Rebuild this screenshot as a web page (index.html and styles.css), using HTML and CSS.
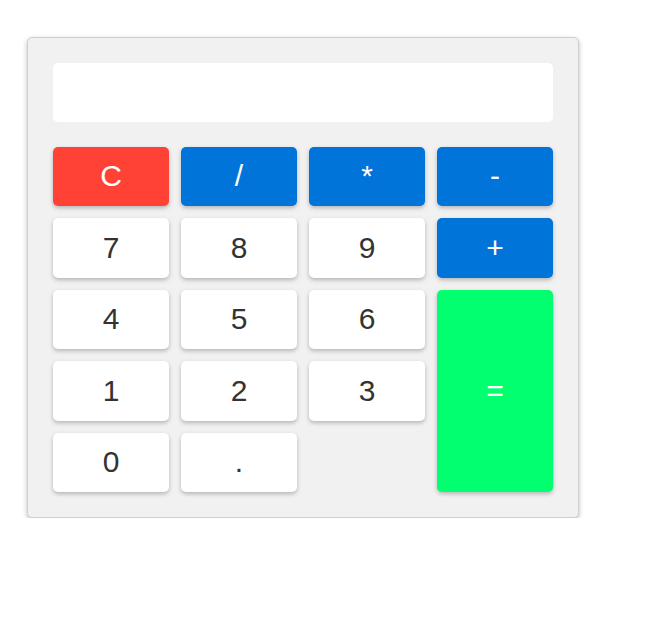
FILE: index.html
```html
<!DOCTYPE html>
<html>
<head>
<meta charset="utf-8">
<link rel="stylesheet" href="styles.css">
</head>
<body>
<div class="calc">
  <div class="display"></div>
  <div class="keys">
    <button class="key clear">C</button>
    <button class="key op">/</button>
    <button class="key op">*</button>
    <button class="key op">-</button>
    <button class="key">7</button>
    <button class="key">8</button>
    <button class="key">9</button>
    <button class="key op">+</button>
    <button class="key">4</button>
    <button class="key">5</button>
    <button class="key">6</button>
    <button class="key equals">=</button>
    <button class="key">1</button>
    <button class="key">2</button>
    <button class="key">3</button>
    <button class="key">0</button>
    <button class="key">.</button>
  </div>
</div>
</body>
</html>
```
FILE: styles.css
```css
html, body {
  margin: 0;
  padding: 0;
  background: #ffffff;
}
body {
  padding: 37px 0 0 27px;
  font-family: "Liberation Sans", Arial, sans-serif;
}
.calc {
  width: 500px;
  padding: 25px;
  background: #f1f1f1;
  border: 1px solid #cfcfcf;
  border-radius: 5px;
  box-shadow: 0 2px 5px rgba(0, 0, 0, 0.25);
}
.display {
  height: 58.5px;
  background: #ffffff;
  border-radius: 5px;
  margin-bottom: 25px;
}
.keys {
  display: grid;
  grid-template-columns: repeat(4, 116px);
  grid-template-rows: repeat(5, 59.5px);
  gap: 12px;
}
.key {
  border: none;
  margin: 0;
  padding: 0;
  background: #ffffff;
  color: #333333;
  font-family: "Liberation Sans", Arial, sans-serif;
  font-size: 30px;
  border-radius: 5px;
  box-shadow: 0 2px 4px rgba(0, 0, 0, 0.25);
}
.op {
  background: #0074d9;
  color: #ffffff;
}
.clear {
  background: #ff4136;
  color: #ffffff;
}
.equals {
  background: #01ff70;
  color: #ffffff;
  grid-column: 4;
  grid-row: 3 / span 3;
}
```
